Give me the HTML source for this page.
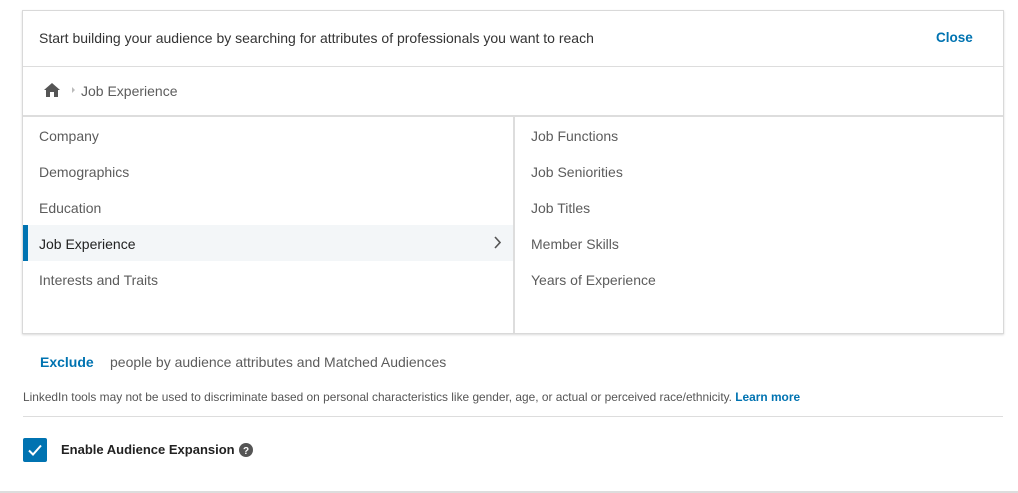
<!DOCTYPE html>
<html><head><style>
body{margin:0;width:1018px;height:493px;background:#fff;font-family:"Liberation Sans",sans-serif;position:relative;overflow:hidden;color:#444}
.box{position:absolute;left:22px;top:10px;width:980px;height:322px;border:1px solid #d9d9d9;box-shadow:0 1px 2px rgba(0,0,0,.15)}
.a{position:absolute;white-space:nowrap}
.t{font-size:14px}
.g{color:#5c5c5c}
</style></head><body>
<div class="box"></div>
<div class="a t" style="left:39px;top:30px;color:#333">Start building your audience by searching for attributes of professionals you want to reach</div>
<div class="a t" style="left:936px;top:30px;font-weight:bold;color:#0073b1;font-size:13.5px">Close</div>
<div class="a" style="left:23px;top:66px;width:980px;height:1px;background:#ddd"></div>
<svg class="a" style="left:44px;top:83px" width="16" height="14" viewBox="0 0 16 14"><path d="M8 0L0 7h2v7h4V9h4v5h4V7h2z" fill="#555"/></svg>
<div class="a" style="left:72px;top:87px;width:0;height:0;border-left:3px solid #bbb;border-top:3px solid transparent;border-bottom:3px solid transparent"></div>
<div class="a t g" style="left:81px;top:83px">Job Experience</div>
<div class="a" style="left:23px;top:115px;width:980px;height:2px;background:#ddd"></div>
<div class="a" style="left:513px;top:117px;width:2px;height:216px;background:#ddd"></div>
<div class="a" style="left:23px;top:225px;width:490px;height:36px;background:#f3f6f8"></div>
<div class="a" style="left:23px;top:225px;width:5px;height:36px;background:#0073b1"></div>
<div class="a t g" style="left:39px;top:128px">Company</div>
<div class="a t g" style="left:39px;top:164px">Demographics</div>
<div class="a t g" style="left:39px;top:200px">Education</div>
<div class="a t" style="left:39px;top:236px;color:#222">Job Experience</div>
<svg class="a" style="left:493px;top:236px" width="8" height="13"><path d="M2 1l5 5.5L2 12" stroke="#555" stroke-width="1.6" fill="none"/></svg>
<div class="a t g" style="left:39px;top:272px">Interests and Traits</div>
<div class="a t g" style="left:531px;top:128px">Job Functions</div>
<div class="a t g" style="left:531px;top:164px">Job Seniorities</div>
<div class="a t g" style="left:531px;top:200px">Job Titles</div>
<div class="a t g" style="left:531px;top:236px">Member Skills</div>
<div class="a t g" style="left:531px;top:272px">Years of Experience</div>
<div class="a t" style="left:40px;top:354px;color:#0073b1;font-weight:bold">Exclude</div>
<div class="a t g" style="left:110px;top:354px">people by audience attributes and Matched Audiences</div>
<div class="a" style="left:23px;top:390px;font-size:11.9px;color:#555">LinkedIn tools may not be used to discriminate based on personal characteristics like gender, age, or actual or perceived race/ethnicity. <b style="color:#0073b1">Learn more</b></div>
<div class="a" style="left:23px;top:416px;width:980px;height:1px;background:#ddd"></div>
<div class="a" style="left:23px;top:438px;width:24px;height:24px;background:#0073b1;border-radius:2px"></div>
<svg class="a" style="left:23px;top:438px" width="24" height="24"><path d="M6 12.5l4 4 8-9" stroke="#fff" stroke-width="2" fill="none"/></svg>
<div class="a t" style="left:61px;top:442px;color:#222;font-weight:bold;font-size:13px">Enable Audience Expansion</div>
<svg class="a" style="left:239px;top:443px" width="14" height="14"><circle cx="7" cy="7" r="7" fill="#555"/><text x="7" y="11" font-size="10" font-weight="bold" fill="#fff" text-anchor="middle" font-family="Liberation Sans">?</text></svg>
<div class="a" style="left:0;top:491px;width:1018px;height:2px;background:#ddd"></div>
</body></html>
